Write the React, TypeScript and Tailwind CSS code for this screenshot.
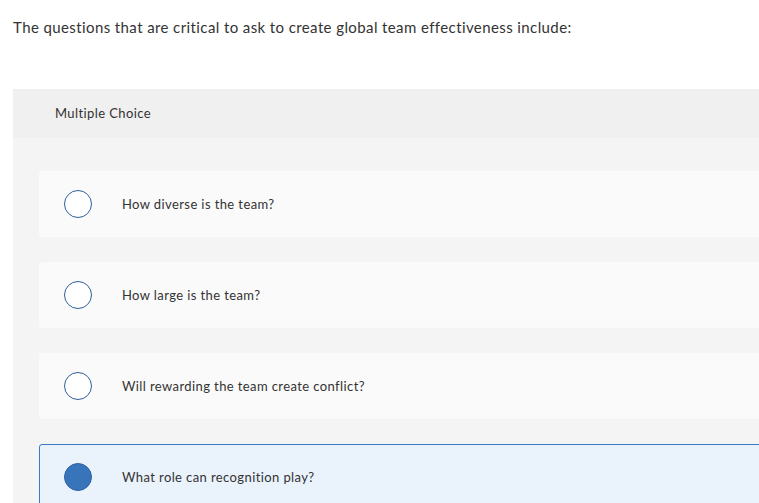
const options = [
  { label: 'How diverse is the team?', selected: false },
  { label: 'How large is the team?', selected: false },
  { label: 'Will rewarding the team create conflict?', selected: false },
  { label: 'What role can recognition play?', selected: true },
]

function Radio({ checked }: { checked: boolean }) {
  return checked ? (
    <span className="block w-[28px] h-[28px] rounded-full bg-[#3874b9] border border-[#2c64a6] shrink-0" />
  ) : (
    <span className="block w-[28px] h-[28px] rounded-full bg-white border-[1.5px] border-[#2f5f98] shrink-0" />
  )
}

export default function App() {
  return (
    <div
      className="min-h-screen bg-white overflow-hidden text-[#333] tracking-[0.4px]"
      style={{ fontFamily: 'Lato, "Open Sans", sans-serif' }}
    >
      <p className="px-[13px] pt-[17px] text-[15px] leading-[20px]">
        The questions that are critical to ask to create global team effectiveness include:
      </p>

      <section className="ml-[13px] mt-[52px] w-[800px] bg-[#f4f4f4]">
        {/* Header */}
        <div className="h-[49px] pl-[42px] pt-px flex items-center bg-[#f0f0f0] text-[13px]">
          Multiple Choice
        </div>

        {/* Options */}
        <div className="pl-[26px] pt-[33px] pb-[20px] flex flex-col gap-[25px]">
          {options.map((o) => (
            <div
              key={o.label}
              className={
                o.selected
                  ? 'h-[66px] flex items-center pl-[24px] rounded-[3px] border border-[#3a7bc6] bg-[#eaf2fc]'
                  : 'h-[66px] flex items-center pl-[25px] rounded-[3px] bg-[#fafafa]'
              }
            >
              <Radio checked={o.selected} />
              <span className="ml-[30px] pt-px text-[13px]">{o.label}</span>
            </div>
          ))}
        </div>
      </section>
    </div>
  )
}
